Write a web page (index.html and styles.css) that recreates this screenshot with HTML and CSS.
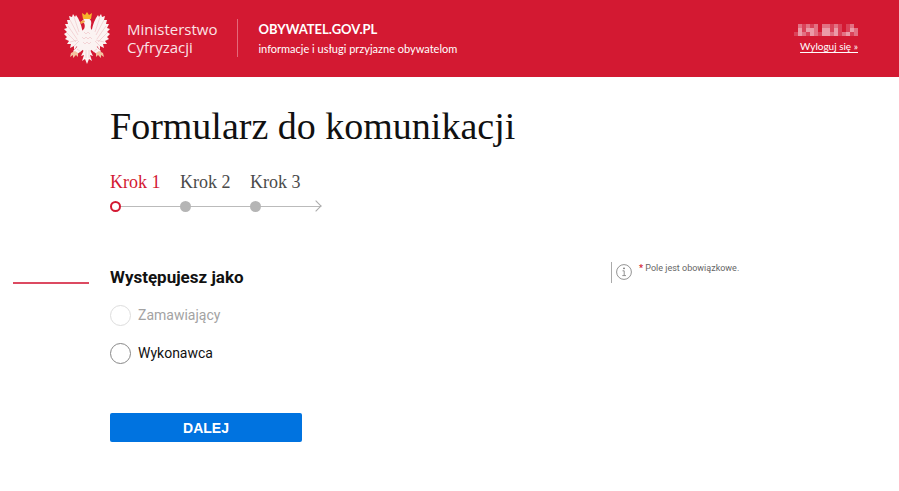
FILE: index.html
```html
<!DOCTYPE html>
<html lang="pl">
<head>
    <meta charset="UTF-8">
    <meta name="viewport" content="width=device-width, initial-scale=1.0">
    <title>Formularz do komunikacji</title>
    <link rel="stylesheet" href="styles.css">
</head>
<body>
    <header class="header">
        <svg class="emblem" viewBox="0 0 46 52" aria-hidden="true">
            <g fill="#fbf3f2">
                <path d="M19 22C18 17 17 11 14 6L12 3L11 5L9 2L8 5L5 4L6 8L3 8L4 12L1 12L3 16L0 17L3 20L0 22L3 25L1 27L5 29L3 32L7 32L6 36L10 34L10 38L13 34L14 38L17 34L20 36Z"/>
                <path d="M27 22C28 17 29 11 32 6L34 3L35 5L37 2L38 5L41 4L40 8L43 8L42 12L45 12L43 16L46 17L43 20L46 22L43 25L45 27L41 29L43 32L39 32L40 36L36 34L36 38L33 34L32 38L29 34L26 36Z"/>
                <path d="M17 10L20 7C22 5 26 6 27 9C28 12 26 14 27 17C31 20 32 24 31 29C30 34 27 37 26 40H20C19 37 16 34 15 29C14 24 16 20 20 17C21 15 21 13 20 11Z"/>
                <path d="M16 32L9 39L12 43L20 37ZM30 32L37 39L34 43L26 37Z"/>
                <path d="M20 38L17 44L20 43L18 49L21 47L23 52L25 47L28 49L26 43L29 44L26 38Z"/>
            </g>
            <g fill="none" stroke="#eebfc3" stroke-width=".6">
                <path d="M6 8L14 23M10 5L15 20M4 14L13 27M3 21L12 30M6 30L14 28M10 34L15 29"/>
                <path d="M40 8L32 23M36 5L31 20M42 14L33 27M43 21L34 30M40 30L32 28M36 34L31 29"/>
                <path d="M20 20L22 22L24 20L26 22M18 25L20 27L22 25L24 27L26 25L28 27M19 30L21 32L23 30L25 32L27 30M22 38V46M25 38V46M13 37L17 40M33 37L29 40"/>
            </g>
            <path d="M19 7L18 1L21 3L23 0L25 3L28 1L27 7Z" fill="#f7b52c"/>
            <path d="M20 8L16 10L17 12L21 10Z" fill="#f2a444"/>
            <path d="M11 39L7 41L6 45L9 43L9 46L12 43L14 45L14 41ZM35 39L39 41L40 45L37 43L37 46L34 43L32 45L32 41Z" fill="#f3c3a0"/>
        </svg>
        <p class="ministry">Ministerstwo<br>Cyfryzacji</p>
        <div class="portal">
            <strong class="portal-name">OBYWATEL.GOV.PL</strong>
            <span class="portal-claim">informacje i usługi przyjazne obywatelom</span>
        </div>
        <div class="account">
            <svg class="user-hidden" viewBox="0 0 64 15" aria-hidden="true">
                <path fill="#da4259" d="M4 2h20v12h-20zM28 2h20v12h-20zM52 2h8v12h-8zM0 10h64v4h-64z"/>
                <g fill="#e27183">
                    <path d="M4 2h4v4h-4zM12 2h4v4h-4zM20 2h4v8h-4zM28 2h8v4h-8zM40 2h4v4h-4zM56 2h4v4h-4z"/>
                    <path d="M8 10h4v4h-4zM20 10h4v4h-4zM36 10h4v4h-4zM48 10h4v4h-4zM60 6h4v8h-4z"/>
                </g>
                <path fill="#eb9aa7" d="M4 6h4v8h-4zM12 6h8v4h-8zM16 10h4v4h-4zM28 6h8v8h-8zM40 6h4v8h-4zM52 10h4v4h-4zM56 6h4v4h-4z"/>
            </svg>
            <a class="logout" href="#">Wyloguj się »</a>
        </div>
    </header>

    <main>
        <div class="intro">
            <h1>Formularz do komunikacji</h1>
            <ol class="steps">
                <li class="step active">Krok 1</li>
                <li class="step">Krok 2</li>
                <li class="step">Krok 3</li>
            </ol>
        </div>

        <form class="form">
            <span class="rule"></span>
            <div class="fields">
                <fieldset>
                    <legend>Występujesz jako</legend>
                    <div class="option">
                        <input type="radio" id="zamawiajacy" name="rola" disabled>
                        <label for="zamawiajacy">Zamawiający</label>
                    </div>
                    <div class="option">
                        <input type="radio" id="wykonawca" name="rola">
                        <label for="wykonawca">Wykonawca</label>
                    </div>
                </fieldset>
                <button type="button" class="next">DALEJ</button>
            </div>
            <div class="notice">
                <svg class="info" viewBox="0 0 16 16" aria-hidden="true">
                    <circle cx="8" cy="8" r="7.4" fill="none" stroke="#777" stroke-width=".8"/>
                    <circle cx="8" cy="4.4" r=".8" fill="#666"/>
                    <path d="M6.5 6.8H8.2V11.5M6.3 11.6H10" fill="none" stroke="#777" stroke-width=".8"/>
                </svg>
                <p><span class="star">*</span> Pole jest obowiązkowe.</p>
            </div>
        </form>
    </main>
</body>
</html>
```

FILE: styles.css
```css
*,
*::before,
*::after {
    margin: 0;
    padding: 0;
    box-sizing: border-box;
}

body {
    background: #fff;
    color: #111;
    font-family: Roboto, sans-serif;
}

.header {
    display: flex;
    align-items: center;
    padding: 12px 41px 13px 64px;
    background: #d31932;
    color: #fff;
}

.emblem {
    width: 46px;
    height: 52px;
}

.ministry {
    margin-left: 17px;
    padding-right: 20px;
    color: #fbe3e6;
    font: 15px/18px "Open Sans", sans-serif;
}

.portal {
    display: flex;
    flex-direction: column;
    gap: 4px;
    padding: 2px 0 0 20px;
    border-left: 1px solid #e4697a;
    font-family: Lato, sans-serif;
}

.portal-name {
    font-size: 13px;
    line-height: 16px;
}

.portal-claim {
    font-size: 11px;
    line-height: 16px;
}

.account {
    display: flex;
    flex-direction: column;
    align-items: flex-end;
    gap: 1px;
    margin-left: auto;
}

.user-hidden {
    width: 64px;
    height: 15px;
}

.logout {
    color: #fff;
    font: 10px/16px Lato, sans-serif;
    text-underline-offset: 2px;
}

.intro {
    padding: 26px 20px 0 110px;
    font-family: Georgia, "Liberation Serif", serif;
}

h1 {
    font-size: 38px;
    font-weight: 400;
    line-height: 46px;
}

.steps {
    display: flex;
    margin-top: 22px;
    list-style: none;
}

/* each step draws its dot and the piece of line after it */
.step {
    position: relative;
    width: 70px;
    padding-bottom: 19px;
    color: #4a4a4a;
    font-size: 18px;
    line-height: 22px;
}

.step::before {
    content: "";
    position: absolute;
    left: 0;
    right: 0;
    bottom: 5px;
    border-top: 1px solid #bbb;
}

.step::after {
    content: "";
    position: absolute;
    left: 0;
    bottom: 0;
    width: 11px;
    height: 11px;
    border-radius: 50%;
    background: #b5b5b5;
}

.step.active {
    color: #d31932;
}

.step.active::after {
    border: 2px solid #d31932;
    background: #fff;
}

.steps::after {
    content: "";
    align-self: flex-end;
    width: 8px;
    height: 8px;
    margin: 0 0 2px -8px;
    border: solid #aaa;
    border-width: 1px 1px 0 0;
    transform: rotate(45deg);
}

.form {
    display: grid;
    grid-template-columns: 76px 1fr 288px;
    column-gap: 21px;
    align-items: start;
    padding-left: 13px;
    margin-top: 50px;
}

.rule {
    height: 2px;
    margin-top: 20px;
    background: #dc4a61;
}

fieldset {
    border: none;
}

legend {
    padding-top: 4px;
    font-size: 17px;
    font-weight: 700;
    line-height: 22px;
}

.option {
    display: flex;
    align-items: center;
    gap: 7px;
    margin-top: 16px;
}

input[type="radio"] {
    appearance: none;
    width: 21px;
    height: 21px;
    border: 1px solid #888;
    border-radius: 50%;
    background: #fff;
}

input[type="radio"]:checked {
    border: 6px solid #0073e0;
}

input[type="radio"]:disabled {
    border-color: #ddd;
}

.option label {
    font-size: 14px;
    line-height: 22px;
}

input:disabled + label {
    color: #a3a3a3;
}

.next {
    width: 192px;
    height: 29px;
    margin-top: 49px;
    border: none;
    border-radius: 2px;
    background: #0073e0;
    color: #fff;
    font: 700 14px "Liberation Sans", sans-serif;
    cursor: pointer;
}

.notice {
    display: flex;
    gap: 7px;
    padding-left: 4px;
    border-left: 1px solid #aaa;
    color: #666;
    font-size: 9px;
    line-height: 12px;
}

.info {
    width: 16px;
    height: 16px;
    margin: 2px 0 3px;
}

.star {
    color: #d31932;
    font-weight: 700;
}
```
